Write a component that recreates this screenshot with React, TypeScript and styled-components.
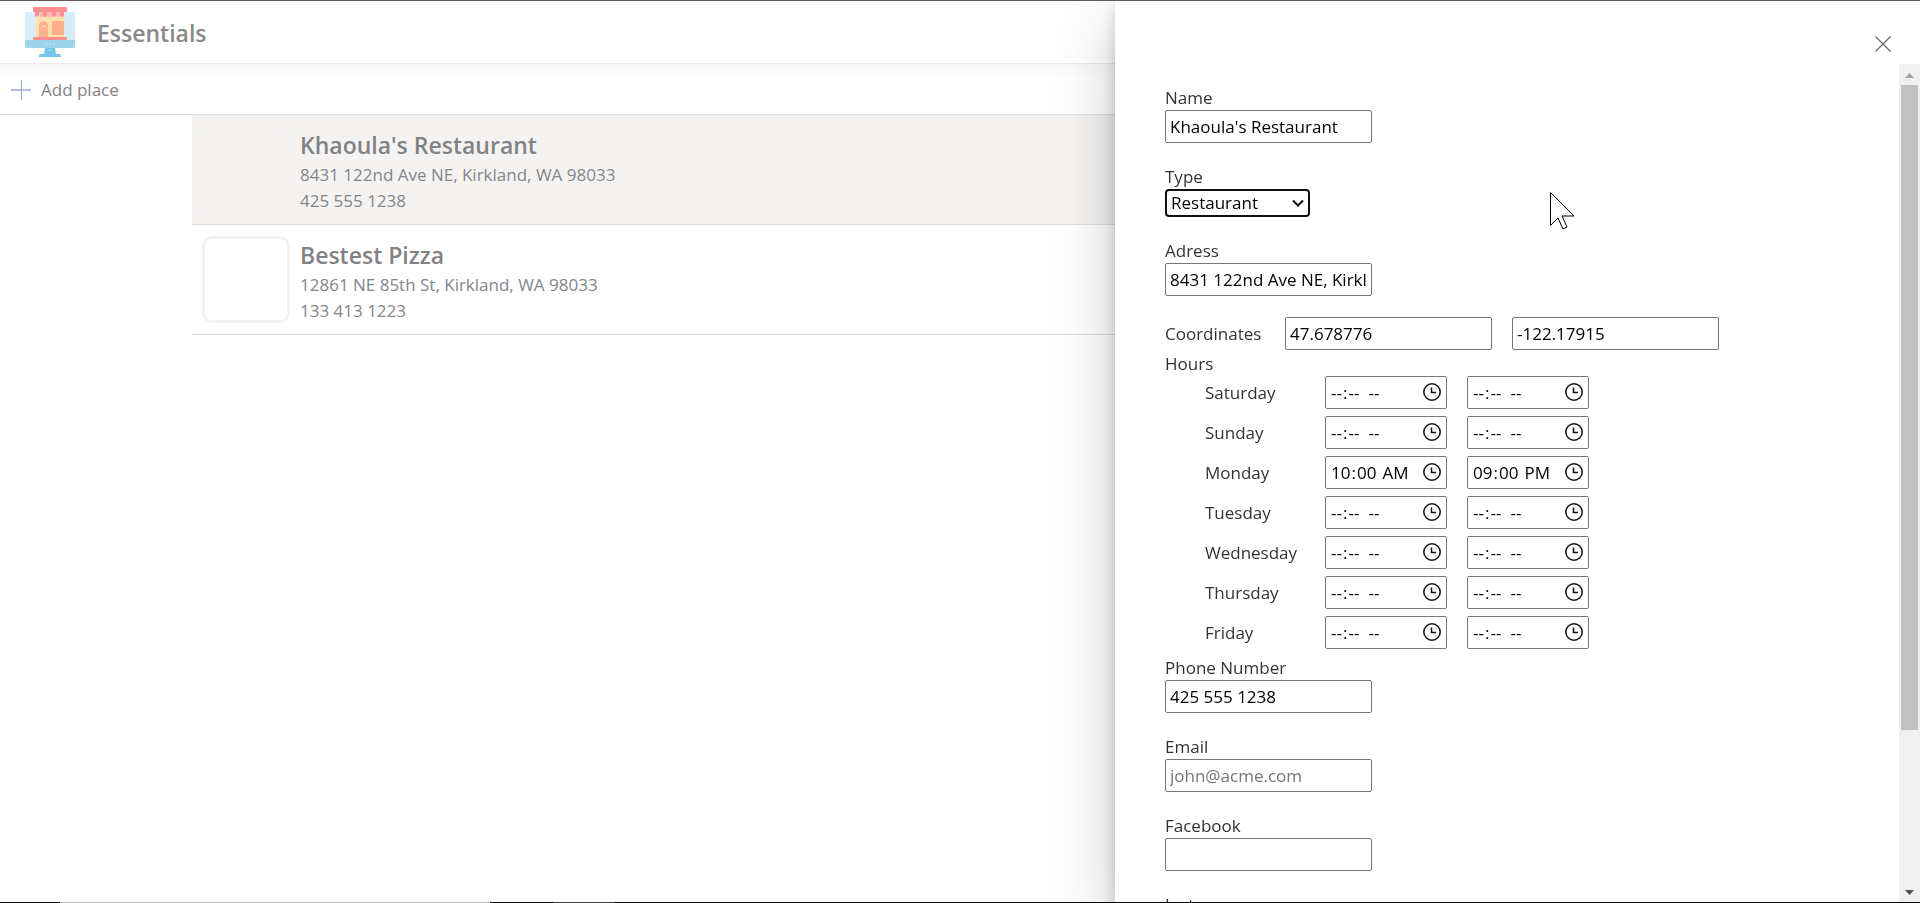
import React from "react";
import styled, { createGlobalStyle } from "styled-components";

const Global = createGlobalStyle`
  *, *::before, *::after { box-sizing: border-box; }
  body { margin: 0; background: #fff; font-family: "Segoe UI", "Open Sans", "Noto Sans", sans-serif; font-size: 17px; line-height: 24px; color: #333; }
  button, input, select { font: inherit; }
`;

const Shell = styled.div`
  min-height: 100vh;
  display: flex;
  flex-direction: column;
  border-top: 1px solid #5b5b5b;
`;

const Header = styled.header`
  display: flex;
  align-items: center;
  gap: 22px;
  height: 63px;
  padding: 0 25px;
  border-bottom: 1px solid #ececec;
`;

const AppTitle = styled.h1`
  margin: 0;
  padding-top: 2px;
  font-size: 23px;
  line-height: 32px;
  font-weight: 600;
  color: #8a8988;
`;

const Toolbar = styled.div`
  display: flex;
  align-items: center;
  height: 51px;
  padding: 1px 10px 0;
  border-bottom: 1px solid #dcdcdc;
  background: linear-gradient(#f9f9f9, #fff 16px);
`;

const AddButton = styled.button`
  display: flex;
  align-items: center;
  gap: 9px;
  padding: 0;
  border: 0;
  background: none;
  color: #848382;
`;

const List = styled.ul`
  flex: 1;
  width: 80%;
  margin: 0 auto;
  padding: 0;
  list-style: none;
`;

const Place = styled.li<{ $selected?: boolean }>`
  display: flex;
  align-items: center;
  gap: 10px;
  height: 110px;
  padding: 0 10px;
  border-bottom: 1px solid #dcdcdc;
  background: ${(p) => (p.$selected ? "#f4f3f2" : "#fff")};
`;

const Thumb = styled.div`
  flex: none;
  width: 88px;
  height: 87px;
  border: 3px solid #f4f3f2;
  border-radius: 10px;
`;

const PlaceText = styled.div`
  display: flex;
  flex-direction: column;
  padding-top: 3px;
  color: #848689;
  line-height: 26px;
`;

const PlaceName = styled.h2`
  margin: 0;
  font-size: 23px;
  line-height: 34px;
  font-weight: 600;
  color: #828285;
`;

const Taskbar = styled.footer`
  display: flex;
  height: 1px;
  background: #0b0b0b;
`;

const TaskSegment = styled.span<{ $width: number; $color: string }>`
  width: ${(p) => p.$width}px;
  background: ${(p) => p.$color};
`;

const Panel = styled.aside`
  position: fixed;
  top: 1px;
  right: 0;
  bottom: 1px;
  width: 805px;
  max-width: 100%;
  display: flex;
  flex-direction: column;
  background: #fff;
  box-shadow: 0 26px 58px rgba(0, 0, 0, 0.22), 0 5px 14px rgba(0, 0, 0, 0.18);
  clip-path: inset(0 0 0 -100px);
`;

const PanelHead = styled.div`
  flex: none;
  display: flex;
  justify-content: flex-end;
  align-items: flex-end;
  height: 63px;
  padding: 0 21px 4px;
`;

const CloseButton = styled.button`
  display: grid;
  place-items: center;
  width: 32px;
  height: 32px;
  padding: 0;
  border: 0;
  background: none;
  color: #6a6967;
`;

const PanelBody = styled.div`
  flex: 1;
  min-height: 0;
  display: flex;
`;

const Form = styled.form`
  flex: 1;
  overflow: hidden;
  padding: 22px 50px 0;
`;

const Field = styled.div<{ $gap?: number }>`
  display: flex;
  flex-direction: column;
  align-items: flex-start;
  margin-top: ${(p) => p.$gap ?? 0}px;
`;

const TextInput = styled.input`
  width: 207px;
  height: 33px;
  padding: 1px 4px;
  border: 1px solid #767676;
  border-radius: 2px;
  background: #fff;
  color: #000;
  &::placeholder { color: #757575; }
`;

const IconBox = styled.div`
  display: grid;
  align-items: center;
  > * { grid-area: 1 / 1; }
  > svg { justify-self: end; margin-right: 6px; pointer-events: none; z-index: 1; }
`;

const Select = styled.select`
  appearance: none;
  width: 145px;
  height: 28px;
  padding: 0 4px;
  border: 2px solid #101010;
  border-radius: 4px;
  background: #fff;
  color: #000;
  line-height: 24px;
`;

const Coordinates = styled.div`
  display: flex;
  align-items: center;
  gap: 20px;
  margin-top: 21px;
`;

const CoordinatesLabel = styled.label`
  width: 100px;
`;

const Hours = styled.fieldset`
  margin: 2px 0 0;
  padding: 0;
  border: 0;
`;

const Legend = styled.legend`
  padding: 0;
`;

const Day = styled.div`
  display: grid;
  grid-template-columns: 100px 122px 122px;
  align-items: center;
  gap: 20px;
  padding: 0 0 7px 40px;
`;

const TimeInput = styled(TextInput)`
  width: 122px;
  &::-webkit-datetime-edit-ampm-field { padding-left: ${(p) => (p.defaultValue ? 3 : 6)}px; }
  &::-webkit-calendar-picker-indicator {
    width: 20px;
    height: 20px;
    margin: 0;
    padding: 0;
    opacity: 0;
  }
`;

const ScrollTrack = styled.div`
  flex: none;
  display: flex;
  flex-direction: column;
  align-items: center;
  width: 21px;
  background: #f0f0f0;
`;

const ScrollArrow = styled.svg`
  flex: none;
  width: 21px;
  height: 21px;
`;

const ScrollThumb = styled.div`
  width: 17px;
  height: 77%;
  margin-bottom: auto;
  background: #c1c1c1;
`;

const Pointer = styled.svg`
  position: fixed;
  top: 191px;
  left: 1549px;
  pointer-events: none;
`;

const Logo = () => (
  <svg width="50" height="50" viewBox="0 0 50 50" aria-hidden="true">
    <rect x="0" y="5" width="50" height="36" rx="2" fill="#d5eef8" />
    <path d="M0 33h50v6a2 2 0 0 1-2 2H2a2 2 0 0 1-2-2z" fill="#9ad5ec" />
    <path d="M20 41h10l1 6h3a2 2 0 0 1 2 2v1H14v-1a2 2 0 0 1 2-2h3z" fill="#74c7e8" />
    <path d="M20 37h2M24 37h2M28 37h2M24.500 43h1.500" stroke="#b9e2f2" strokeWidth="1.500" />
    <rect x="11" y="4" width="28" height="27" fill="#fde0ad" />
    <path d="M14 30V19a4.500 4.500 0 0 1 9 0v11z" fill="#ffb08a" />
    <path d="M17 20q1.500-2 4 0" stroke="#fde0ad" strokeWidth="1.500" fill="none" />
    <rect x="27" y="14" width="12" height="14" rx="1" fill="#ffb08a" />
    <path d="M10 4h4v3a2.500 2.500 0 0 1-4 2zM18 4h4v4a2 2 0 0 1-4 0zM27 4h4v4a2 2 0 0 1-4 0zM35 4h4v4a2 2 0 0 1-4 0z" fill="#fb8f8f" />
    <path d="M14 4h4v4a2 2 0 0 1-4 0zM22 4h5v4a2 2 0 0 1-5 0zM31 4h4v4a2 2 0 0 1-4 0z" fill="#fdb7b7" />
    <rect x="8" y="0" width="34" height="5" rx="1" fill="#fb8f8f" />
    <rect x="8" y="30" width="34" height="3" rx="1" fill="#fb8f8f" />
  </svg>
);

type TimeBoxProps = { id?: string; label?: string; value: string };

const TimeBox = ({ id, label, value }: TimeBoxProps) => (
  <IconBox>
    <TimeInput id={id} type="time" aria-label={label} defaultValue={value} />
    <svg width="18" height="20" viewBox="0 0 18 20" aria-hidden="true">
      <circle cx="9" cy="9" r="8.200" stroke="#101010" strokeWidth="1.500" fill="none" />
      <path d="M8.500 4.500v5h4.500" stroke="#101010" strokeWidth="1.500" fill="none" />
    </svg>
  </IconBox>
);

const days: [string, string, string][] = [
  ["Saturday", "", ""],
  ["Sunday", "", ""],
  ["Monday", "10:00", "21:00"],
  ["Tuesday", "", ""],
  ["Wednesday", "", ""],
  ["Thursday", "", ""],
  ["Friday", "", ""],
];

export default function App() {
  return (
    <>
      <Global />
      <Shell>
        <Header>
          <Logo />
          <AppTitle>Essentials</AppTitle>
        </Header>
        <Toolbar>
          <AddButton type="button">
            <svg width="22" height="20" viewBox="0 0 22 20" aria-hidden="true">
              <path d="M1 10h20" stroke="#b9bde2" strokeWidth="2" fill="none" />
              <path d="M11.500 0v20" stroke="#8fa6d4" strokeWidth="1" fill="none" />
            </svg>
            Add place
          </AddButton>
        </Toolbar>
        <List>
          <Place $selected>
            <Thumb />
            <PlaceText>
              <PlaceName>Khaoula's Restaurant</PlaceName>
              <span>8431 122nd Ave NE, Kirkland, WA 98033</span>
              <span>425 555 1238</span>
            </PlaceText>
          </Place>
          <Place>
            <Thumb />
            <PlaceText>
              <PlaceName>Bestest Pizza</PlaceName>
              <span>12861 NE 85th St, Kirkland, WA 98033</span>
              <span>133 413 1223</span>
            </PlaceText>
          </Place>
        </List>
        <Taskbar>
          <TaskSegment $width={60} $color="#0b0b0b" />
          <TaskSegment $width={430} $color="#bcbcbc" />
          <TaskSegment $width={64} $color="#0b0b0b" />
          <TaskSegment $width={60} $color="#3d3d3d" />
        </Taskbar>
      </Shell>
      <Panel>
        <PanelHead>
          <CloseButton type="button" aria-label="Close">
            <svg width="16" height="16" viewBox="0 0 16 16" aria-hidden="true">
              <path d="M0.500 0.500l15 15M15.500 0.500l-15 15" stroke="currentColor" strokeWidth="1.200" fill="none" />
            </svg>
          </CloseButton>
        </PanelHead>
        <PanelBody>
          <Form>
            <Field>
              <label htmlFor="name">Name</label>
              <TextInput id="name" defaultValue="Khaoula's Restaurant" />
            </Field>
            <Field $gap={22}>
              <label htmlFor="type">Type</label>
              <IconBox>
                <Select id="type" defaultValue="Restaurant">
                  <option>Restaurant</option>
                </Select>
                <svg width="12" height="8" viewBox="0 0 12 8" aria-hidden="true">
                  <path d="M1 1.500l5 5 5-5" stroke="#101010" strokeWidth="2" fill="none" />
                </svg>
              </IconBox>
            </Field>
            <Field $gap={22}>
              <label htmlFor="address">Adress</label>
              <TextInput id="address" defaultValue="8431 122nd Ave NE, Kirkland, WA 98033" />
            </Field>
            <Coordinates>
              <CoordinatesLabel htmlFor="latitude">Coordinates</CoordinatesLabel>
              <TextInput id="latitude" defaultValue="47.678776" />
              <TextInput aria-label="Longitude" defaultValue="-122.17915" />
            </Coordinates>
            <Hours>
              <Legend>Hours</Legend>
              {days.map(([day, open, close]) => (
                <Day key={day}>
                  <label htmlFor={day}>{day}</label>
                  <TimeBox id={day} value={open} />
                  <TimeBox label={`${day} closing time`} value={close} />
                </Day>
              ))}
            </Hours>
            <Field>
              <label htmlFor="phone">Phone Number</label>
              <TextInput id="phone" type="tel" defaultValue="425 555 1238" />
            </Field>
            <Field $gap={22}>
              <label htmlFor="email">Email</label>
              <TextInput id="email" type="email" placeholder="john@acme.com" />
            </Field>
            <Field $gap={22}>
              <label htmlFor="facebook">Facebook</label>
              <TextInput id="facebook" />
            </Field>
            <Field $gap={22}>
              <label htmlFor="instagram">Instagram</label>
              <TextInput id="instagram" />
            </Field>
          </Form>
          <ScrollTrack aria-hidden="true">
            <ScrollArrow viewBox="0 0 21 21"><path d="M6 14h9l-4.500-5z" fill="#a3a3a3" /></ScrollArrow>
            <ScrollThumb />
            <ScrollArrow viewBox="0 0 21 21"><path d="M6 9h9l-4.500 5z" fill="#505050" /></ScrollArrow>
          </ScrollTrack>
        </PanelBody>
      </Panel>
      <Pointer width="26" height="40" viewBox="0 0 26 40" aria-hidden="true">
        <path d="M1.500 1.500v33l7.500-7.500 5 11 4-2-5-11h12z" fill="#fff" stroke="#000" strokeWidth="1" />
      </Pointer>
    </>
  );
}
